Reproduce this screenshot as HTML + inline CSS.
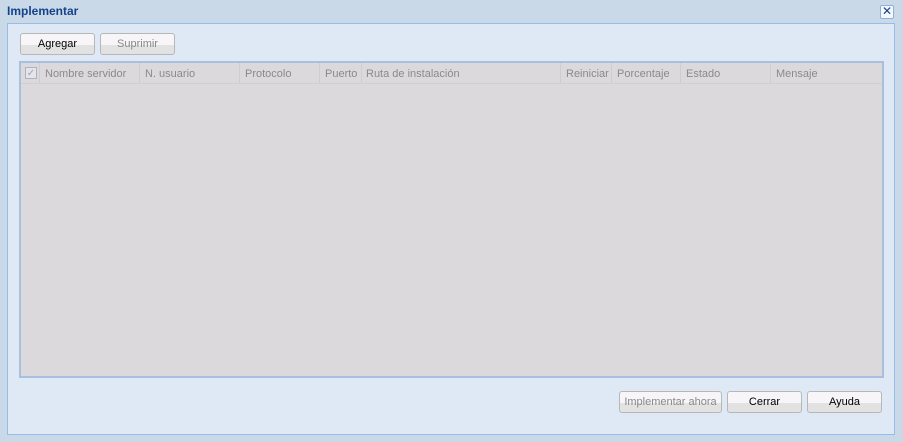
<!DOCTYPE html>
<html><head><style>
*{margin:0;padding:0;box-sizing:border-box}
body{width:903px;height:442px;background:#c9d9e8;font-family:"Liberation Sans",sans-serif;font-size:11px;position:relative;overflow:hidden}
.title{position:absolute;left:7px;top:4px;font-weight:bold;font-size:12px;color:#15428b}
.close{position:absolute;left:880px;top:5px;width:14px;height:14px;border:1px solid #8fb0d8;background:#f4f8fd;border-radius:2px;color:#15428b;font-size:12px;line-height:11px;text-align:center}
.panel{position:absolute;left:7px;top:23px;width:888px;height:412px;background:#dfe9f5;border:1px solid #99bbe8}
.btn{position:absolute;height:22px;border:1px solid #b7b7b7;border-radius:3px;background:linear-gradient(#f7f5f7 0,#f7f5f7 55%,#e2e2e2 55%,#e2e2e2 100%);text-align:center;line-height:21px;font-size:11px;color:#000}
.dis{color:#888}
.grid{position:absolute;left:19px;top:61px;width:865px;height:317px;background:#dcd9dc;border:2px solid #a9bfe0}
.hdr{position:absolute;left:0;top:0;width:861px;height:21px;background:#dcd9dc;border-bottom:1px solid #d2cfd2}
.c{position:absolute;top:0;height:20px;line-height:22px;padding-left:5px;color:#8a8a8a;border-right:1px solid #d0cdd0;white-space:nowrap;overflow:hidden}
.cb{position:absolute;left:4px;top:4px;width:12px;height:12px;border:1px solid #b0b0c0;background:#e4e4ea;color:#98a4c4;font-size:10px;line-height:11px;text-align:center}
</style></head><body>
<div class="title">Implementar</div>
<div class="close">✕</div>
<div class="panel"></div>
<div class="btn" style="left:20px;top:33px;width:75px">Agregar</div>
<div class="btn dis" style="left:100px;top:33px;width:75px">Suprimir</div>
<div class="grid"><div class="hdr">
<div class="c" style="left:0;width:19px"><div class="cb">✓</div></div>
<div class="c" style="left:19px;width:100px">Nombre servidor</div>
<div class="c" style="left:119px;width:100px">N. usuario</div>
<div class="c" style="left:219px;width:80px">Protocolo</div>
<div class="c" style="left:299px;width:42px">Puerto</div>
<div class="c" style="left:341px;width:199px;padding-left:4px">Ruta de instalación</div>
<div class="c" style="left:540px;width:51px">Reiniciar</div>
<div class="c" style="left:591px;width:69px">Porcentaje</div>
<div class="c" style="left:660px;width:90px">Estado</div>
<div class="c" style="left:750px;width:111px;border-right:none">Mensaje</div>
</div></div>
<div class="btn dis" style="left:619px;top:391px;width:103px">Implementar ahora</div>
<div class="btn" style="left:727px;top:391px;width:75px">Cerrar</div>
<div class="btn" style="left:807px;top:391px;width:75px">Ayuda</div>
</body></html>
